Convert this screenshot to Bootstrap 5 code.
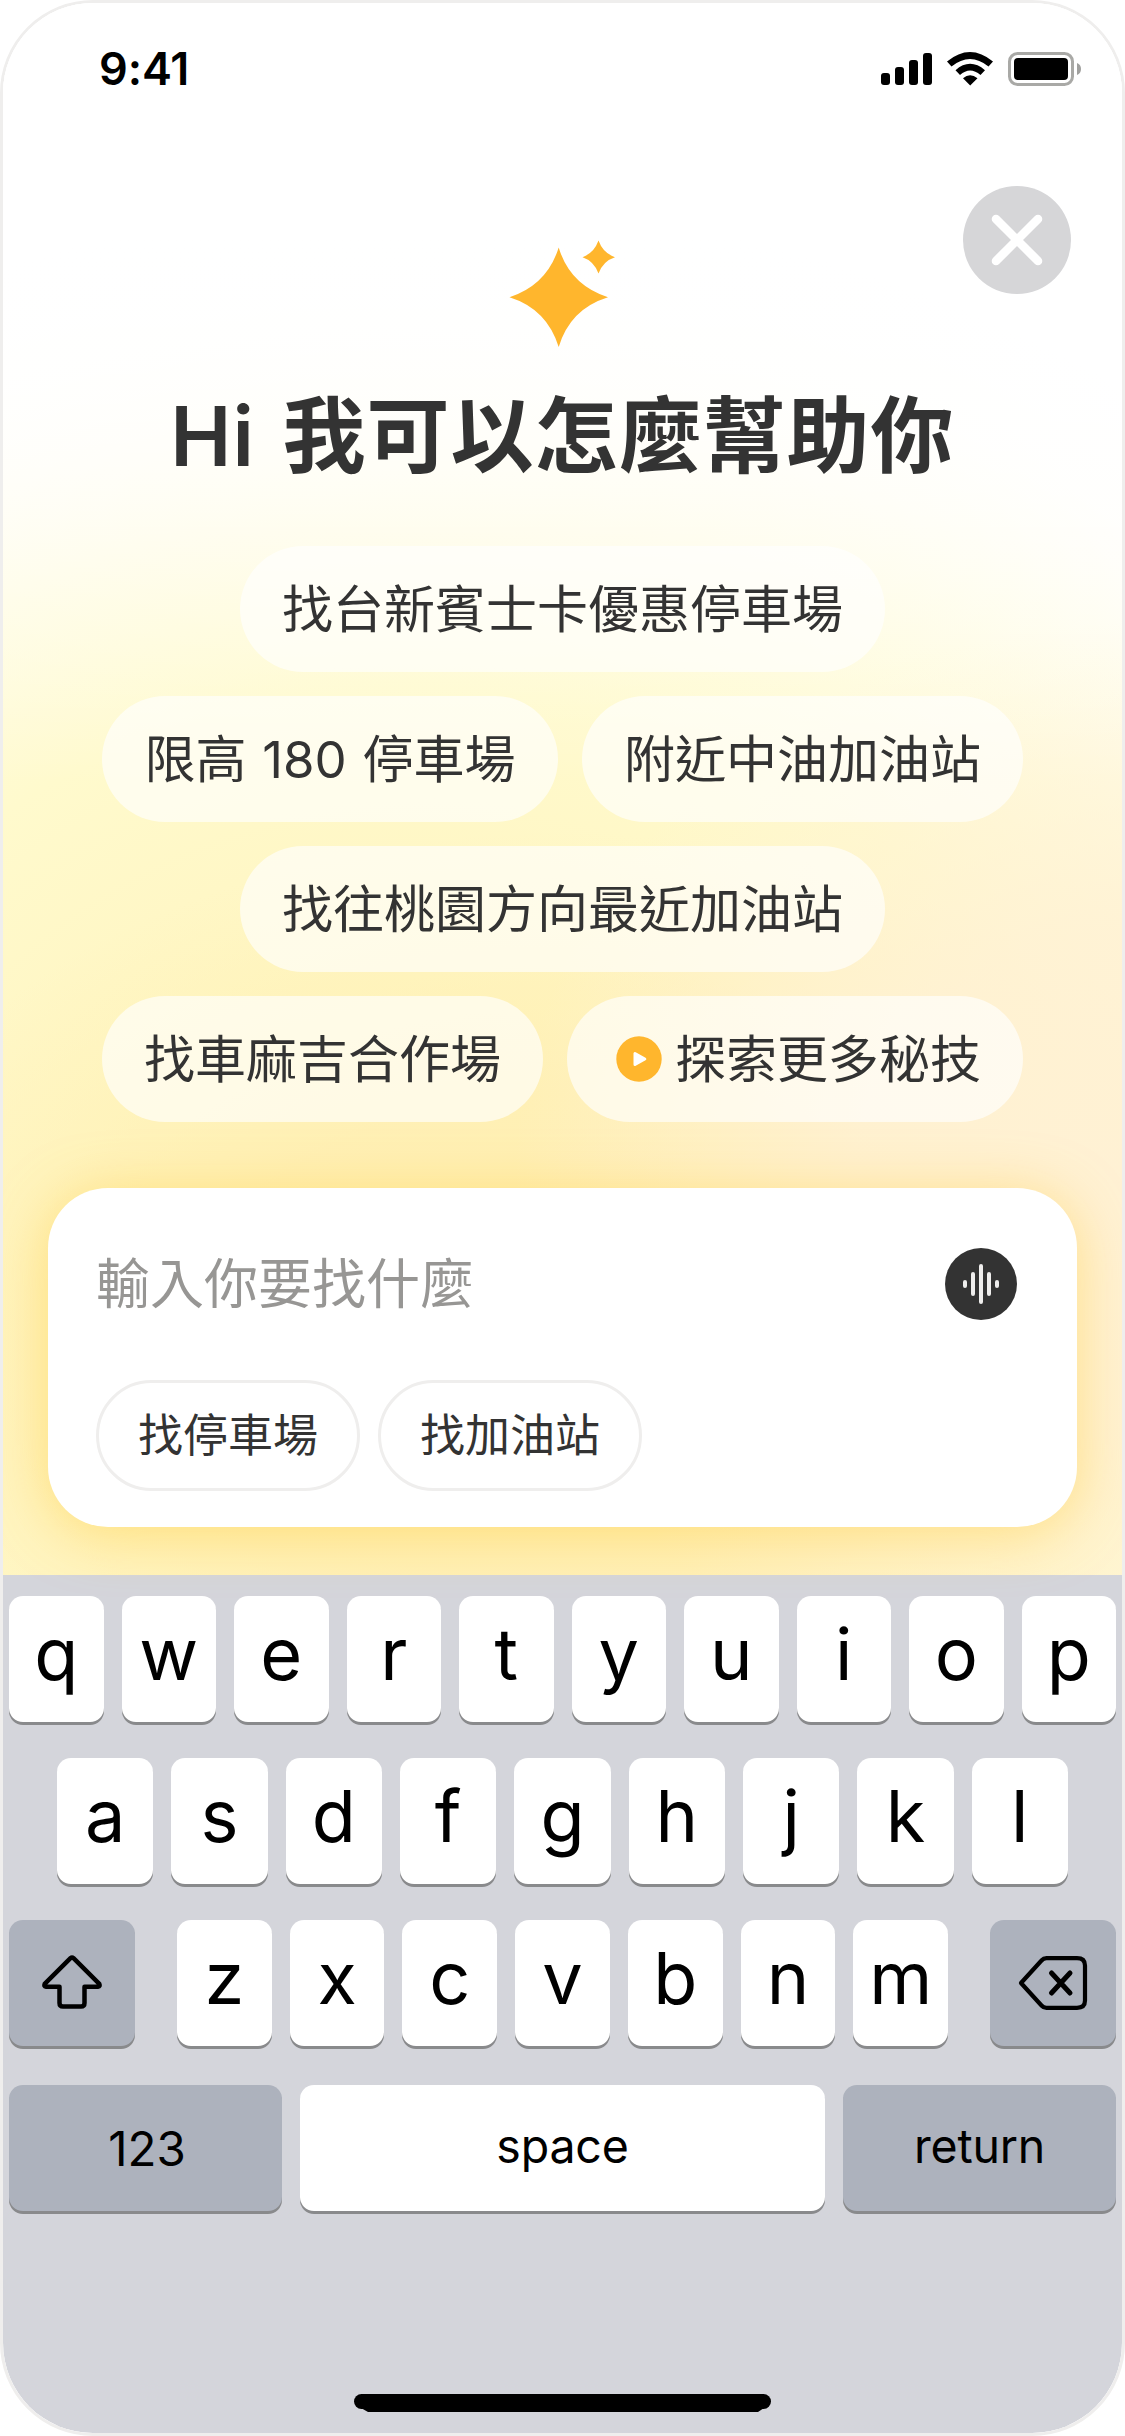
<!DOCTYPE html>
<html lang="zh-Hant">
<head>
<meta charset="utf-8">
<meta name="viewport" content="width=device-width, initial-scale=1">
<title>Hi 我可以怎麼幫助你</title>
<link href="https://cdn.jsdelivr.net/npm/bootstrap@5.3.0/dist/css/bootstrap.min.css" rel="stylesheet">
<style>
  body { font-family: Inter, "Noto Sans CJK TC", sans-serif; color: #333; background: #fff; line-height: 1; }
  svg { display: block; }
  .phone { width: 1125px; height: 2436px; border: 3px solid #efeeed; border-radius: 93px; }
  .assistant {
    height: 1572px;
    background:
      linear-gradient(180deg, #fff 0, #fff 230px, rgba(255,255,255,.72) 440px, rgba(255,255,255,.3) 600px, rgba(255,255,255,0) 780px),
      radial-gradient(ellipse 620px 560px at 1130px 1180px, rgba(255,241,212,1) 0, rgba(255,241,212,.85) 45%, rgba(255,241,212,0) 100%),
      radial-gradient(ellipse 760px 520px at 560px 1350px, rgba(255,238,178,1) 0, rgba(255,238,178,.75) 50%, rgba(255,238,178,0) 100%),
      radial-gradient(ellipse 1250px 1080px at 420px 1280px, #fff5b8 0, #fff7c6 40%, #fffacd 55%, #fffce2 72%, #fffefa 90%, #fff 100%);
  }
  .status-bar { height: 132px; padding: 0 39px 0 96px; }
  .status-time { font-size: 45px; font-weight: 600; color: #000; letter-spacing: -.1px; padding-bottom: 2px; }
  .close-btn { width: 108px; height: 108px; background: #d6d6d8; margin: 183px 51px 0 0; }
  .sparkle { margin-top: 105px; }
  .hero-title { font-size: 83px; font-weight: 700; line-height: 120px; letter-spacing: 1px; margin: 28px 0 49px; }
  .hero-title .latin { font-weight: 600; font-size: 82px; margin-right: 7px; }
  .chips { gap: 24px; }
  .chip { height: 126px; padding: 0 42px; border-radius: 63px; background: rgba(255,255,255,.65); color: #333; font-size: 51px; font-weight: 400; line-height: 1; white-space: nowrap; }
  .chip-height { width: 456px; padding: 0; word-spacing: 1.5px; }
  .ask-card { width: 1029px; height: 339px; margin-top: 66px; border-radius: 60px; padding: 60px 60px 36px 48px; background: #fff; box-shadow: 0 6px 54px rgba(255,205,60,.5); }
  .ask-placeholder { font-size: 54px; color: #979694; padding-top: 1px; }
  .voice-btn { width: 72px; height: 72px; background: #333; }
  .mode-row { gap: 18px; }
  .mode-btn { height: 111px; padding: 0 39px; border: 3px solid #efeeed; border-radius: 56px; font-size: 45px; color: #333; background: #fff; line-height: 1; }
  .keyboard { height: 858px; background: #d4d5db; padding: 21px 6px 0; color: #000; border-radius: 0 0 90px 90px; }
  .key-row { gap: 18px; margin-bottom: 36px; }
  .key-row-last { margin: 39px 0 183px; }
  .key-cap { flex: 1 1 0; min-width: 0; height: 126px; border-radius: 14px; background: #fff; box-shadow: 0 3px 0 #898a8c; font-size: 72px; padding-bottom: 10px; }
  .key-fn { background: #adb2bd; padding-bottom: 0; }
  .key-side { flex: 0 0 126px; }
  .key-wide { flex: 0 0 273px; }
  .key-label { font-size: 46.5px; letter-spacing: -.2px; padding-bottom: 4px; }
  .key-digits { font-size: 47.5px; letter-spacing: 0; padding: 1px 0 0 3px; }
</style>
<script src="https://cdn.jsdelivr.net/npm/bootstrap@5.3.0/dist/js/bootstrap.bundle.min.js"></script>
</head>
<body>
<div class="phone overflow-hidden position-relative">
  <button class="close-btn btn rounded-circle p-0 border-0 position-absolute top-0 end-0 d-flex align-items-center justify-content-center" aria-label="Close">
    <svg width="54" height="54" viewBox="0 0 54 54"><path d="M6 6l42 42M48 6L6 48" stroke="#fff" stroke-width="8.6" stroke-linecap="round"/></svg>
  </button>
  <main class="assistant d-flex flex-column align-items-center">
    <header class="status-bar w-100 d-flex align-items-center justify-content-between">
      <span class="status-time">9:41</span>
      <svg width="202" height="36" viewBox="0 0 202 36">
        <rect x="0" y="22" width="9" height="12" rx="3"/><rect x="14" y="16" width="9" height="18" rx="3"/><rect x="28" y="9" width="9" height="25" rx="3"/><rect x="42" y="2" width="9" height="32" rx="3"/>
        <path d="M66 10.500Q89 -8.500 112 10.500L107.500 15.500Q89 0.500 70.500 15.500ZM74.500 19.200Q89 6.500 104 19.200L99.500 24Q89 15 79 24ZM82 27.200Q89 21.500 96.500 27.200L89.200 34.500Z"/>
        <rect x="128.500" y="2.500" width="63" height="31" rx="8" fill="none" stroke="#a9a9a6" stroke-width="3"/>
        <rect x="133" y="7" width="54" height="22" rx="4"/>
        <path d="M196 12q4 1.500 4 6t-4 6z" fill="#a0a09e"/>
      </svg>
    </header>
    <svg class="sparkle flex-shrink-0" width="108" height="108" viewBox="508 240 108 108" role="img" aria-label="sparkle">
      <path d="M557.700 247.500Q569 285 607 297.200Q569 309 557.700 347Q546 309 508.500 297.200Q546 285 557.700 247.500Z" fill="#ffb62d"/>
      <path d="M597.500 240.500Q602 253 614 257.200Q602 261 597.500 273.500Q593 261 581.500 257.200Q593 253 597.500 240.500Z" fill="#ffb62d"/>
    </svg>
    <h1 class="hero-title text-nowrap"><span class="latin">Hi</span> 我可以怎麼幫助你</h1>
    <section class="chips d-flex flex-column align-items-center">
      <div class="d-flex chips"><button class="chip btn border-0">找台新賓士卡優惠停車場</button></div>
      <div class="d-flex chips"><button class="chip chip-height btn border-0">限高 180 停車場</button><button class="chip btn border-0">附近中油加油站</button></div>
      <div class="d-flex chips"><button class="chip btn border-0">找往桃園方向最近加油站</button></div>
      <div class="d-flex chips"><button class="chip btn border-0">找車麻吉合作場</button><button class="chip btn border-0 d-flex align-items-center"><svg width="66" height="60" viewBox="0 0 66 60"><circle cx="30" cy="30" r="22.700" fill="#ffb62d"/><path d="M26 24.500v11l9.800-5.500z" fill="#fff" stroke="#fff" stroke-width="3" stroke-linejoin="round"/></svg>探索更多秘技</button></div>
    </section>
    <section class="ask-card d-flex flex-column justify-content-between">
      <div class="d-flex align-items-center justify-content-between">
        <span class="ask-placeholder">輸入你要找什麼</span>
        <button class="voice-btn btn rounded-circle border-0 p-0" aria-label="Voice">
          <svg width="72" height="72" viewBox="0 0 72 72"><path d="M20 34v4M28 26v20M36 18v36M44 26v20M52 34v4" stroke="#efeeed" stroke-width="4" stroke-linecap="round"/></svg>
        </button>
      </div>
      <div class="mode-row d-flex"><button class="mode-btn btn">找停車場</button><button class="mode-btn btn">找加油站</button></div>
    </section>
  </main>
  <section class="keyboard">
    <div class="key-row d-flex"><div class="key-cap d-flex align-items-center justify-content-center">q</div><div class="key-cap d-flex align-items-center justify-content-center">w</div><div class="key-cap d-flex align-items-center justify-content-center">e</div><div class="key-cap d-flex align-items-center justify-content-center">r</div><div class="key-cap d-flex align-items-center justify-content-center">t</div><div class="key-cap d-flex align-items-center justify-content-center">y</div><div class="key-cap d-flex align-items-center justify-content-center">u</div><div class="key-cap d-flex align-items-center justify-content-center">i</div><div class="key-cap d-flex align-items-center justify-content-center">o</div><div class="key-cap d-flex align-items-center justify-content-center">p</div></div>
    <div class="key-row d-flex px-5"><div class="key-cap d-flex align-items-center justify-content-center">a</div><div class="key-cap d-flex align-items-center justify-content-center">s</div><div class="key-cap d-flex align-items-center justify-content-center">d</div><div class="key-cap d-flex align-items-center justify-content-center">f</div><div class="key-cap d-flex align-items-center justify-content-center">g</div><div class="key-cap d-flex align-items-center justify-content-center">h</div><div class="key-cap d-flex align-items-center justify-content-center">j</div><div class="key-cap d-flex align-items-center justify-content-center">k</div><div class="key-cap d-flex align-items-center justify-content-center">l</div></div>
    <div class="key-row d-flex">
      <div class="key-cap key-fn key-side me-4 d-flex align-items-center justify-content-center"><svg width="64" height="60" viewBox="0 0 64 60"><path d="M30.500 5.200Q32 3.800 33.500 5.200L59.300 30.800Q60.500 33.500 58 33.700H44.500V50Q44.500 53.500 41 53.500H23Q19.500 53.500 19.500 50V33.700H6Q3.500 33.500 4.700 30.800Z" fill="none" stroke="#000" stroke-width="4.500" stroke-linejoin="round"/></svg></div>
      <div class="key-cap d-flex align-items-center justify-content-center">z</div><div class="key-cap d-flex align-items-center justify-content-center">x</div><div class="key-cap d-flex align-items-center justify-content-center">c</div><div class="key-cap d-flex align-items-center justify-content-center">v</div><div class="key-cap d-flex align-items-center justify-content-center">b</div><div class="key-cap d-flex align-items-center justify-content-center">n</div><div class="key-cap d-flex align-items-center justify-content-center">m</div>
      <div class="key-cap key-fn key-side ms-4 d-flex align-items-center justify-content-center"><svg width="72" height="54" viewBox="0 0 72 54"><path d="M4 27L24.500 4.500Q26.500 2.200 29.500 2.200H60Q68 2.200 68 9.500V44.500Q68 51.800 60 51.800H29.500Q26.500 51.800 24.500 49.500Z" fill="none" stroke="#000" stroke-width="4.200" stroke-linejoin="round"/><path d="M34.500 17L53 37M53 17L34.500 37" stroke="#000" stroke-width="5" stroke-linecap="round"/></svg></div>
    </div>
    <div class="key-row key-row-last d-flex">
      <div class="key-cap key-fn key-wide key-label key-digits d-flex align-items-center justify-content-center">123</div>
      <div class="key-cap key-label d-flex align-items-center justify-content-center">space</div>
      <div class="key-cap key-fn key-wide key-label d-flex align-items-center justify-content-center">return</div>
    </div>
    <svg class="mx-auto" width="417" height="18" viewBox="0 0 417 18"><rect width="417" height="15" rx="7.500"/><path d="M7 14H410L404 18H14Z"/></svg>
  </section>
</div>
</body>
</html>
